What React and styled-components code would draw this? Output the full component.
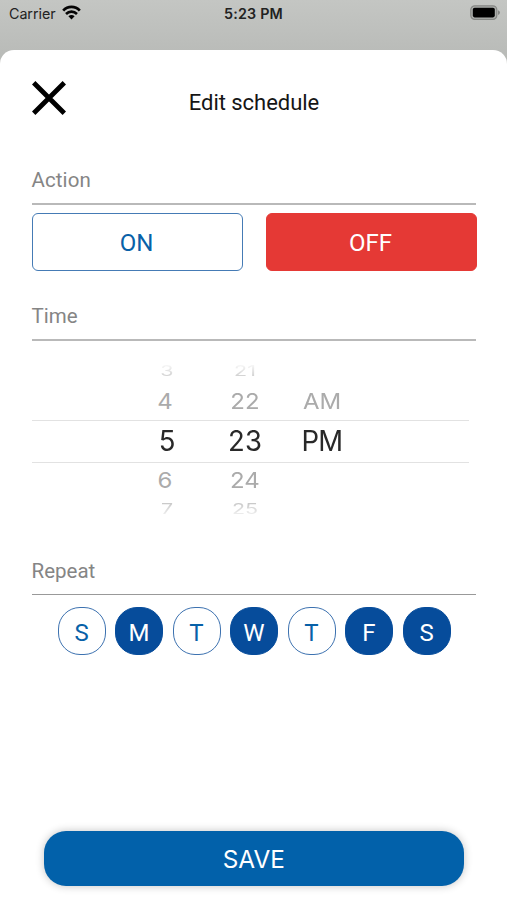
import React from "react";
import styled, { createGlobalStyle } from "styled-components";

const GlobalStyle = createGlobalStyle`
  * { box-sizing: border-box; }
  body { margin: 0; background: #bdbfbc; font-family: Roboto, sans-serif; }
  button { font: inherit; padding: 0; margin: 0; cursor: pointer; }
`;

const Screen = styled.div`
  width: 507px;
  height: 900px;
  display: flex;
  flex-direction: column;
  overflow: hidden;
  background: linear-gradient(#c4c6c3 0, #b8bab7 60px);
`;

const StatusBar = styled.header`
  flex: 0 0 50px;
  display: grid;
  grid-template-columns: 1fr auto 1fr;
  align-items: start;
  padding: 4px 7px 0 9px;
  font-family: Inter, sans-serif;
  font-size: 14.3px;
  line-height: 20px;
  color: #222;
`;

const Carrier = styled.div`
  display: flex;
  gap: 6px;
  letter-spacing: -0.05px;
  svg { margin-top: 1px; }
`;

const Clock = styled.div`
  margin-left: -2px;
  font-weight: 600;
  letter-spacing: 0.2px;
`;

const BatterySlot = styled.div`
  display: flex;
  justify-content: flex-end;
  padding-top: 1px;
`;

const Sheet = styled.main`
  flex: 1;
  display: flex;
  flex-direction: column;
  padding: 0 31px 0 32px;
  background: #fff;
  border-radius: 14px 14px 0 0;
`;

const TitleBar = styled.div`
  height: 107px;
  display: grid;
  grid-template-columns: 36px 1fr 36px;
  align-items: start;
  padding-top: 30px;
`;

const CloseButton = styled.button`
  width: 36px;
  height: 36px;
  border: 0;
  background: none;
  svg { display: block; }
`;

const Title = styled.h1`
  margin: 8px 0 0;
  text-align: center;
  font-size: 22px;
  font-weight: 400;
  line-height: 30px;
  letter-spacing: -0.05px;
  color: #151515;
`;

const SectionLabel = styled.h2`
  margin: 0 0 0 -0.5px;
  height: ${(p) => p.$height || 48}px;
  padding-top: ${(p) => p.$top || 9}px;
  border-bottom: ${(p) => p.$line || 2}px solid ${(p) => p.$color || "#b9b9b9"};
  font-size: 20.5px;
  font-weight: 400;
  line-height: 28px;
  letter-spacing: ${(p) => p.$spacing || 0}px;
  color: #858585;
`;

const Actions = styled.div`
  height: 88px;
  display: grid;
  grid-template-columns: 1fr 1fr;
  gap: 23px;
  align-items: start;
  padding-top: 8px;
  margin: 0 -0.5px 0 -0.5px;
`;

const ActionButton = styled.button`
  height: 58px;
  border-radius: 6px;
  border: 1.5px solid ${(p) => (p.$active ? "#e53935" : "#457bb5")};
  background: ${(p) => (p.$active ? "#e53935" : "#fff")};
  color: ${(p) => (p.$active ? "#fff" : "#0861a8")};
  font-size: 24px;
  line-height: 28px;
  padding: 2px 1px 0 0;
`;

const Picker = styled.div`
  height: 206px;
  padding-top: 19px;
`;

const PickerRow = styled.div`
  width: 437px;
  height: ${(p) => p.$height}px;
  display: grid;
  grid-template-columns: 90px 66px 88px;
  padding-left: 90px;
  align-items: center;
  font-family: Inter, sans-serif;
  font-size: ${(p) => p.$size}px;
  color: ${(p) => p.$color};
  border: 0 solid #e2e2e2;
  border-width: ${(p) => (p.$selected ? "1.5px 0" : 0)};
`;

const PickerValue = styled.span`
  text-align: center;
  line-height: 1;
  letter-spacing: ${(p) => p.$spacing || 0}px;
  transform: translateX(${(p) => p.$dx || 0}px) scaleY(${(p) => p.$squash});
`;

const Fade = styled.div`
  mask-image: linear-gradient(${(p) => (p.$up ? "to top" : "to bottom")}, transparent 10%, #000 85%);
`;

const Days = styled.div`
  display: flex;
  justify-content: center;
  gap: 9.5px;
  padding-top: 12px;
`;

const Day = styled.button`
  width: 48px;
  height: 48px;
  border-radius: 22px;
  border: 1.3px solid ${(p) => (p.$on ? "#064c9b" : "#3d72b0")};
  background: ${(p) => (p.$on ? "#064c9b" : "#fff")};
  color: ${(p) => (p.$on ? "#fff" : "#0861a8")};
  font-size: 24px;
  line-height: 28px;
  padding-top: 3px;
`;

const SaveButton = styled.button`
  height: 55px;
  margin: auto 12px 14px 11.5px;
  border: 0;
  border-radius: 22px;
  background: #0261aa;
  box-shadow: 0 0 9px rgba(0, 0, 0, 0.24);
  color: #fff;
  font-family: Inter, sans-serif;
  font-size: 24.3px;
  line-height: 30px;
`;

const WifiIcon = () => (
  <svg width="19" height="16" viewBox="0 0 19 16" fill="none" stroke="#050505">
    <path d="M1.2 5.6C5.8 .7 13.2 .7 17.8 5.6" strokeWidth="2.8" />
    <path d="M4 9C7.2 5.8 11.8 5.8 15 9" strokeWidth="2.6" />
    <path d="M6.4 11.3C8.2 9.6 10.8 9.6 12.6 11.3L9.5 14.5Z" fill="#050505" stroke="none" />
  </svg>
);

const BatteryIcon = () => (
  <svg width="30" height="16" viewBox="0 0 30 16">
    <rect x=".8" y=".8" width="26" height="13.6" rx="4" fill="#adafac" stroke="#858784" strokeWidth="1.2" />
    <rect x="2.8" y="2.8" width="22" height="9.6" rx="1.8" fill="#000" />
    <path d="M28 5.3Q30 6 30 7.6Q30 9.3 28 10Z" fill="#858784" />
  </svg>
);

const CloseIcon = () => (
  <svg width="36" height="36" viewBox="0 0 36 36" stroke="#000" strokeWidth="4.8">
    <path d="M1.7 2.7L32.3 33.3M32.3 2.7L1.7 33.3" />
  </svg>
);

const rows = [
  { values: ["3", "21", ""], height: 24, size: 21.5, color: "#c4c4c4", squash: 0.65, fade: "down" },
  { values: ["4", "22", "AM"], height: 36, size: 24, color: "#ababab", squash: 0.92, dx: [-2, 0, 0] },
  { values: ["5", "23", "PM"], height: 43, size: 27.5, color: "#292929", squash: 1.02, spacing: [0, 0, -0.8], selected: true },
  { values: ["6", "24", ""], height: 35, size: 24, color: "#ababab", squash: 0.92, dx: [-2, 0, 0] },
  { values: ["7", "25", ""], height: 24, size: 21.5, color: "#c4c4c4", squash: 0.65, fade: "up" },
];

const days = [
  ["S", false], ["M", true], ["T", false], ["W", true],
  ["T", false], ["F", true], ["S", true],
];

function PickerLine({ row }) {
  const line = (
    <PickerRow $height={row.height} $size={row.size} $color={row.color} $selected={row.selected}>
      {row.values.map((v, i) => (
        <PickerValue key={i} $squash={row.squash} $dx={row.dx?.[i]} $spacing={row.spacing?.[i]}>{v}</PickerValue>
      ))}
    </PickerRow>
  );
  return row.fade ? <Fade $up={row.fade === "up"}>{line}</Fade> : line;
}

export default function App() {
  return (
    <Screen>
      <GlobalStyle />
      <StatusBar>
        <Carrier>Carrier <WifiIcon /></Carrier>
        <Clock>5:23 PM</Clock>
        <BatterySlot><BatteryIcon /></BatterySlot>
      </StatusBar>
      <Sheet>
        <TitleBar>
          <CloseButton aria-label="Close"><CloseIcon /></CloseButton>
          <Title>Edit schedule</Title>
        </TitleBar>
        <SectionLabel $spacing={0.1}>Action</SectionLabel>
        <Actions>
          <ActionButton>ON</ActionButton>
          <ActionButton $active>OFF</ActionButton>
        </Actions>
        <SectionLabel>Time</SectionLabel>
        <Picker>
          {rows.map((row) => <PickerLine key={row.values[0]} row={row} />)}
        </Picker>
        <SectionLabel $line={1} $color="#999" $top={10}>Repeat</SectionLabel>
        <Days>
          {days.map(([name, on], i) => <Day key={i} $on={on}>{name}</Day>)}
        </Days>
        <SaveButton>SAVE</SaveButton>
      </Sheet>
    </Screen>
  );
}
